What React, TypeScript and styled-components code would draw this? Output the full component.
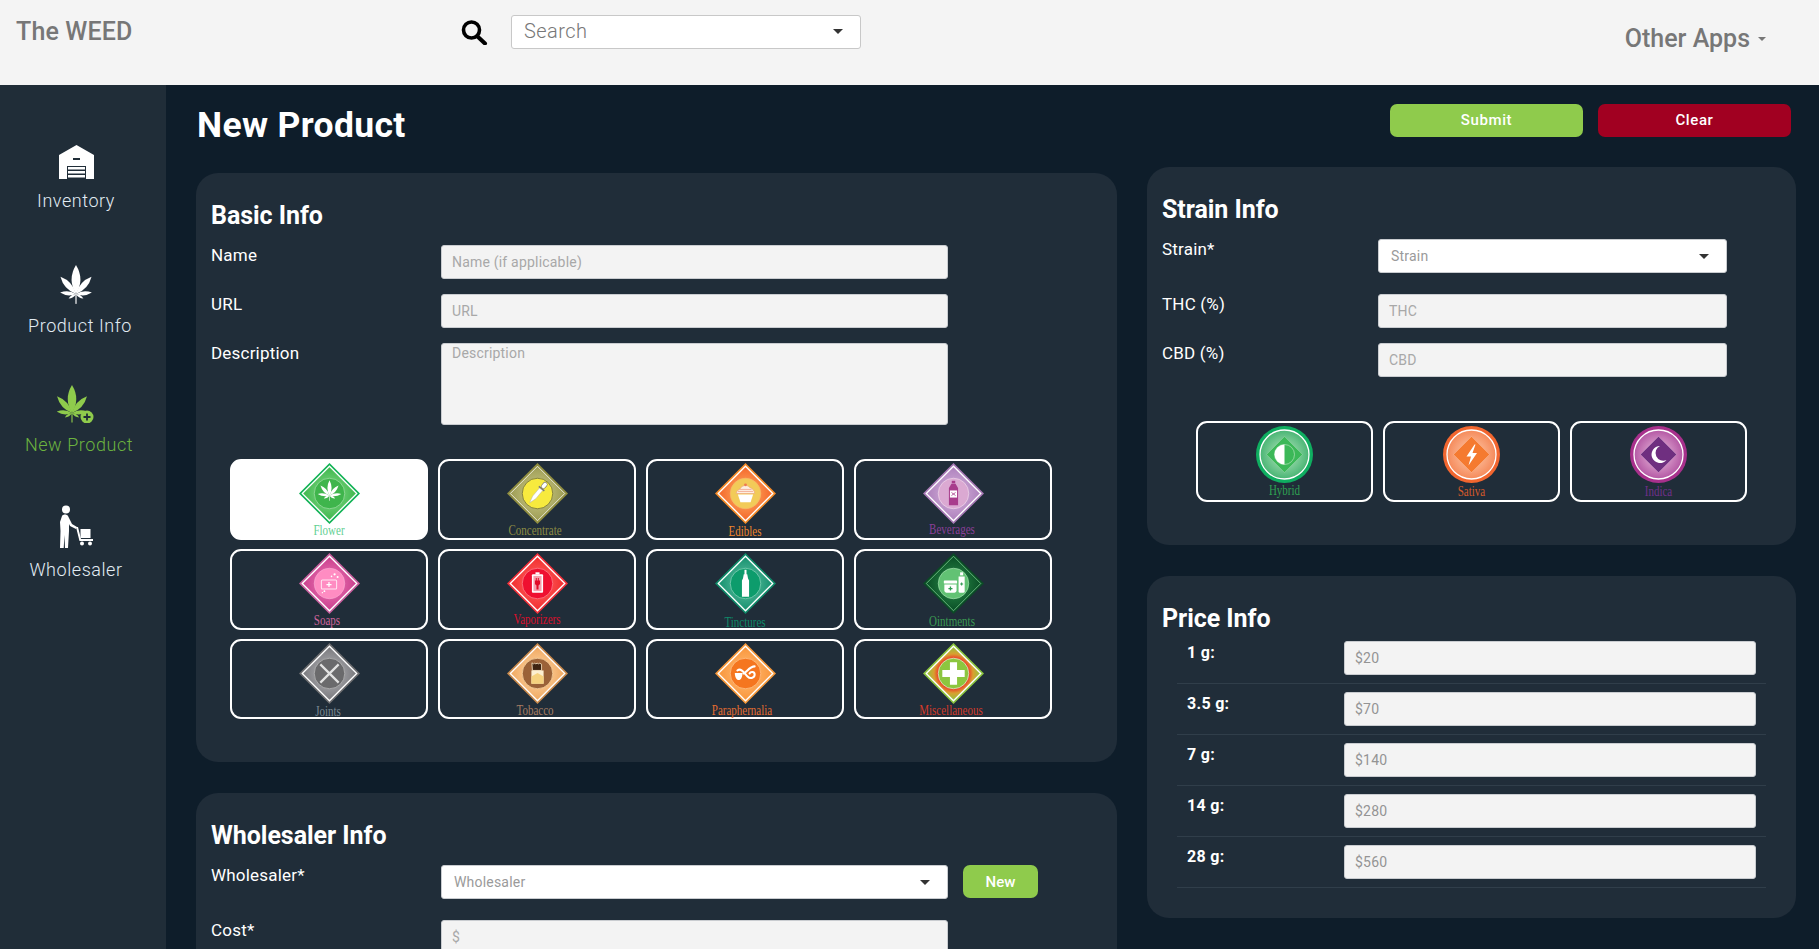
import React from "react";
import styled, { createGlobalStyle } from "styled-components";

const Global = createGlobalStyle`
  html, body { margin: 0; padding: 0; height: 100%; overflow: hidden; background: #0e1d2a; }
  body { font-family: Roboto, "Liberation Sans", sans-serif; }
  * { box-sizing: border-box; }
`;

const Page = styled.div`
  height: 100vh;
  display: flex;
  flex-direction: column;
  overflow: hidden;
`;
const Header = styled.header`
  height: 85px;
  flex: none;
  background: #f4f4f4;
  display: flex;
  align-items: flex-start;
  color: #777;
`;
const Brand = styled.div`
  margin: 17px 0 0 16px;
  width: 444px;
  font-size: 25px;
  line-height: 30px;
  font-weight: 500;
  letter-spacing: 0.15px;
`;
const SearchIcon = styled.svg`
  width: 28px;
  height: 26px;
  margin-top: 19px;
  flex: none;
`;
const SearchBox = styled.div`
  margin: 15px 0 0 23px;
  width: 350px;
  height: 34px;
  background: #fff;
  border: 1px solid #c8c8c8;
  border-radius: 3px;
  padding: 0 17px 2px 12px;
  display: flex;
  align-items: center;
  justify-content: space-between;
  font-size: 20px;
  font-weight: 300;
  letter-spacing: 0.45px;
  color: #777;
`;
const Caret = styled.span<{ $c?: string; $s?: number }>`
  width: 0;
  height: 0;
  flex: none;
  border-left: ${(p) => p.$s ?? 5}px solid transparent;
  border-right: ${(p) => p.$s ?? 5}px solid transparent;
  border-top: ${(p) => p.$s ?? 5}px solid ${(p) => p.$c ?? "#333"};
`;
const OtherApps = styled.div`
  margin: 24px 0 0 auto;
  padding-right: 53px;
  display: flex;
  align-items: center;
  gap: 8px;
  font-size: 25px;
  line-height: 30px;
  font-weight: 500;
  letter-spacing: 0;
`;
const Body = styled.div`
  flex: 1;
  display: flex;
  min-height: 0;
`;
const Sidebar = styled.nav`
  width: 166px;
  flex: none;
  background: #202d38;
  padding: 60px 14px 0 0;
  display: flex;
  flex-direction: column;
  align-items: center;
`;
const NavItem = styled.div<{ $h: number; $active?: boolean; $dx?: number }>`
  height: ${(p) => p.$h}px;
  width: 100%;
  display: flex;
  flex-direction: column;
  align-items: center;
  color: ${(p) => (p.$active ? "#6cb33f" : "#e2ecf4")};
  font-size: 18px;
  line-height: 22px;
  font-weight: 300;
  letter-spacing: 0.55px;
  svg { display: block; flex: none; }
  span { margin-top: 11px; transform: translateX(${(p) => p.$dx ?? 0}px); white-space: nowrap; }
`;
const Main = styled.main`
  flex: 1;
  display: flex;
  gap: 30px;
  padding-left: 30px;
  min-width: 0;
`;
const LeftCol = styled.div`
  width: 921px;
  flex: none;
`;
const RightCol = styled.div`
  width: 649px;
  flex: none;
`;
const Title = styled.h1`
  margin: 0;
  height: 88px;
  padding: 22px 0 0 1px;
  font-size: 35.5px;
  line-height: 36px;
  font-weight: 700;
  color: #fff;
  letter-spacing: 0.35px;
`;
const ButtonRow = styled.div`
  display: flex;
  justify-content: flex-end;
  gap: 15px;
  padding: 19px 5px 30px 0;
`;
const ActionButton = styled.button<{ $bg: string }>`
  width: 193px;
  height: 33px;
  border: 0;
  border-radius: 7px;
  background: ${(p) => p.$bg};
  color: #fff;
  font: 500 15px/33px Roboto, sans-serif;
  letter-spacing: 0.6px;
  padding: 0;
`;
const Card = styled.section<{ $h: number }>`
  height: ${(p) => p.$h}px;
  background: #202d39;
  border-radius: 22px;
  padding: 27px 0 0 15px;
  margin-bottom: 31px;
  color: #fff;
`;
const CardTitle = styled.h2<{ $mb?: number }>`
  margin: 0 0 ${(p) => p.$mb ?? 13}px;
  font-size: 25px;
  line-height: 32px;
  font-weight: 700;
  letter-spacing: -0.05px;
`;
const FormRow = styled.div<{ $mb: number; $col: number }>`
  display: flex;
  align-items: flex-start;
  margin-bottom: ${(p) => p.$mb}px;
  > label {
    width: ${(p) => p.$col}px;
    flex: none;
    font-size: 17px;
    line-height: 21px;
    letter-spacing: 0.2px;
  }
`;
const TextInput = styled.input<{ $w: number }>`
  width: ${(p) => p.$w}px;
  height: 34px;
  flex: none;
  background: #f3f3f3;
  border: 1px solid #c9ccd0;
  border-radius: 3px;
  padding: 0 10px;
  font: 14px Roboto, sans-serif;
  letter-spacing: 0.2px;
  outline: none;
  &::placeholder { color: #a8a8a8; opacity: 1; }
`;
const TextArea = styled.textarea`
  width: 507px;
  height: 82px;
  flex: none;
  background: #f3f3f3;
  border: 1px solid #c9ccd0;
  border-radius: 3px;
  padding: 1px 10px;
  font: 14px Roboto, sans-serif;
  letter-spacing: 0.2px;
  outline: none;
  resize: none;
  &::placeholder { color: #a8a8a8; opacity: 1; }
`;
const SelectBox = styled.div<{ $w: number }>`
  width: ${(p) => p.$w}px;
  height: 34px;
  flex: none;
  background: #fff;
  border: 1px solid #c9ccd0;
  border-radius: 3px;
  padding: 0 17px 0 12px;
  display: flex;
  align-items: center;
  justify-content: space-between;
  font-size: 14px;
  letter-spacing: 0.2px;
  color: #9a9a9a;
`;
const NewButton = styled.button`
  width: 75px;
  height: 33px;
  margin-left: 15px;
  border: 0;
  border-radius: 7px;
  background: #8fcb4c;
  color: #fff;
  font: 500 15px Roboto, sans-serif;
  padding: 0;
`;
const TileGrid = styled.div<{ $cols: number; $w: number; $gap: number; $pl: number; $mt: number; $row: string }>`
  display: grid;
  grid-template-columns: repeat(${(p) => p.$cols}, ${(p) => p.$w}px);
  grid-template-rows: ${(p) => p.$row};
  column-gap: ${(p) => p.$gap}px;
  row-gap: 9px;
  padding-left: ${(p) => p.$pl}px;
  margin-top: ${(p) => p.$mt}px;
`;
const Tile = styled.div<{ $active?: boolean; $pt: number }>`
  border: 2px solid #fff;
  border-radius: 11px;
  background: ${(p) => (p.$active ? "#fff" : "transparent")};
  display: flex;
  flex-direction: column;
  align-items: center;
  padding-top: ${(p) => p.$pt}px;
  svg { display: block; flex: none; }
`;
const TileLabel = styled.span<{ $c: string; $dx: number; $dy: number }>`
  font: 11px/12px "Liberation Serif", serif;
  color: ${(p) => p.$c};
  white-space: nowrap;
  transform: translate(${(p) => p.$dx}px, ${(p) => p.$dy}px) scaleY(1.35);
`;
const PriceList = styled.div`
  margin-left: 15px;
  width: 589px;
`;
const PriceRow = styled.div`
  height: 51px;
  padding: 8px 10px 8px 10px;
  border-bottom: 1px solid #303e4a;
  display: flex;
  align-items: flex-start;
  justify-content: space-between;
  > label {
    font-size: 16px;
    line-height: 24px;
    font-weight: 700;
    letter-spacing: 0.3px;
  }
  input::placeholder { color: #949494; }
`;

const leafPath = "M0 0Q1 -0.5 0 -1Q-1 -0.5 0 0Z";
const wideLeaf: [number, number, number][] = [
  [0, 1, 0.17], [-42, 0.88, 0.14], [42, 0.88, 0.14], [-82, 0.78, 0.11], [82, 0.78, 0.11], [-118, 0.42, 0.08], [118, 0.42, 0.08],
];
const tallLeaf: [number, number, number][] = [
  [0, 1, 0.19], [-42, 0.8, 0.13], [42, 0.8, 0.13], [-85, 0.55, 0.09], [85, 0.55, 0.09], [-122, 0.3, 0.05], [122, 0.3, 0.05],
];
function Leaf({ x, y, s, fill, parts }: { x: number; y: number; s: number; fill: string; parts: [number, number, number][] }) {
  return (
    <g transform={`translate(${x} ${y}) scale(${s})`} fill={fill}>
      {parts.map(([a, l, w], i) => (
        <path key={i} d={leafPath} transform={`rotate(${a}) scale(${w * 1.6} ${l})`} />
      ))}
      <rect x={-0.02} y={0} width={0.04} height={0.34} />
    </g>
  );
}

const glyphs: Record<string, React.ReactNode> = {
  flower: <Leaf x={30} y={32} s={15} fill="#fff" parts={wideLeaf} />,
  concentrate: (
    <g transform="rotate(40 30 30)" fill="#fff">
      <rect x={27.6} y={16} width={4.8} height={7} rx={2.3} fill="#777" />
      <rect x={28.2} y={16.6} width={3.6} height={6} rx={1.7} />
      <rect x={26.5} y={23} width={7} height={1.6} fill="#777" />
      <path d="M28 24.6h4v10.4l-2 7-2-7z" stroke="#aaa" strokeWidth="0.4" />
    </g>
  ),
  edibles: (
    <g>
      <path d="M22.5 31h15l-2.5 7.5h-10z" fill="#fff" />
      <path d="M21 30c0-3 3-4 4-5 1-3 7-4 9-1 3 1 5 3 5 6z" fill="#fdeee0" stroke="#eea777" strokeWidth="0.7" />
      <path d="M22.5 28h15M24 26h12" stroke="#f09a80" strokeWidth="0.7" />
      <circle cx={30} cy={21.5} r={1.4} fill="#ee7a50" />
    </g>
  ),
  beverages: (
    <g fill="#a83c8c">
      <rect x={28.3} y={17.5} width={3.4} height={2.5} />
      <path d="M28 20.5h4l2.5 4v17h-9v-17z" />
      <rect x={26.5} y={27} width={7} height={7} fill="#fff" />
      <path d="M28 29l4 3M32 29l-4 3" stroke="#a83c8c" strokeWidth="0.8" />
    </g>
  ),
  soaps: (
    <g fill="none" stroke="#ffe6f2">
      <rect x={22} y={26.5} width={15} height={9} rx={1} strokeWidth="1" />
      <path d="M29.5 28.5v5M27 31h5" stroke="#fff" strokeWidth="1.2" />
      <g fill="#fff" stroke="none">
        <circle cx={35} cy={21} r={1.1} /><circle cx={38} cy={23.5} r={1} /><circle cx={32} cy={23} r={0.8} />
        <circle cx={25} cy={37.5} r={0.9} /><circle cx={23} cy={39} r={0.7} />
      </g>
    </g>
  ),
  vaporizers: (
    <g>
      <rect x={28} y={19} width={4} height={2} fill="#fff" />
      <rect x={24.5} y={21} width={11} height={18} rx={1} fill="#fff" />
      <rect x={26} y={22.5} width={8} height={15} fill="#f5a0ac" />
      <path d="M27.5 27v3.5l1.5 1.5v4h2v-4l1.5-1.5v-3.5h-1.2v-2.5h-1v2.5h-1v-2.5h-1v2.5z" fill="#e00c28" />
    </g>
  ),
  tinctures: (
    <g fill="#fff">
      <rect x={29} y={16.5} width={2} height={5} />
      <path d="M28.3 21h3.4l.8 4 1 2v16h-7v-16l1-2z" />
    </g>
  ),
  ointments: (
    <g fill="#fff">
      <rect x={20.5} y={27} width={13} height={3} rx={0.6} />
      <path d="M21 31h12v6a2 2 0 0 1-2 2h-8a2 2 0 0 1-2-2z" />
      <path d="M27 33v4M25 35h4" stroke="#2d9a50" strokeWidth="1.3" />
      <rect x={36.5} y={19} width={3} height={3} />
      <path d="M35 23h6v14.5a1.5 1.5 0 0 1-1.5 1.5h-3a1.5 1.5 0 0 1-1.5-1.5z" />
      <path d="M38 29v3M36.5 30.5h3" stroke="#2d9a50" strokeWidth="1" />
    </g>
  ),
  joints: <path d="M21 21l18 18M39 21l-18 18" stroke="#e2e2e2" strokeWidth="2.2" />,
  tobacco: (
    <g>
      <path d="M24.5 19.5l1.5 1 1.2-.6 1.2.6 1.3-.6 1.2.6 1.3-.6 1.8 1V27h-9z" fill="#3d2412" stroke="#fbe9c8" strokeWidth="0.8" />
      <path d="M24 27h12v13H24z" fill="#fdf0d0" />
      <path d="M24 33l6-3.5 6 3.5v7H24z" fill="#f6d27e" />
    </g>
  ),
  paraphernalia: (
    <g fill="none" stroke="#fff" strokeLinecap="round">
      <path d="M22 27c4-3 7 3 10 6s7 1 7-2-4-3-5-1" strokeWidth="2" />
      <path d="M39 23c-5 0-8 6-11 7" strokeWidth="2" />
      <path d="M19.5 29.5h7.5c0 4-1.5 7-3.7 7s-3.8-3-3.8-7z" fill="#fff" stroke="none" />
    </g>
  ),
  misc: <path d="M26.5 19h7v7.5h7.5v7h-7.5v7.5h-7v-7.5h-7.5v-7h7.5z" fill="#fff" />,
};

type B = {
  key: string; label: string; edge: string; g0: string; g1: string; ring: string; ringStroke: string;
  text: string; dx: number; dy: number; inner?: number; line?: string;
};
const tiles: B[] = [
  { key: "flower", label: "Flower", edge: "#0fb254", g0: "#8ddc8e", g1: "#3cb64b", ring: "#3fb54c", ringStroke: "#a4e0a8", text: "#62cf92", dx: 0, dy: 0 },
  { key: "concentrate", label: "Concentrate", edge: "#8f8d3f", g0: "#cfcd8a", g1: "#9d9c55", ring: "#f7ea3e", ringStroke: "#62623a", text: "#8c8b44", dx: -2, dy: 0, inner: 0.8 },
  { key: "edibles", label: "Edibles", edge: "#f68c28", g0: "#ffb468", g1: "#f4662a", ring: "#f2cb58", ringStroke: "#f6b76a", text: "#ef852c", dx: 0, dy: 1 },
  { key: "beverages", label: "Beverages", edge: "#a87ab6", g0: "#d8b6de", g1: "#ad80bc", ring: "#dba9d2", ringStroke: "#eed6ea", text: "#8a3f98", dx: -1, dy: -1 },
  { key: "soaps", label: "Soaps", edge: "#c9609f", g0: "#f07ab8", g1: "#c83e8c", ring: "#ff8cc2", ringStroke: "#f9a8d0", text: "#cf649c", dx: -2, dy: 0 },
  { key: "vaporizers", label: "Vaporizers", edge: "#f3303a", g0: "#ff6a6a", g1: "#f22c2c", ring: "#ef1030", ringStroke: "#ff8a92", text: "#d80f2c", dx: 0, dy: -1 },
  { key: "tinctures", label: "Tinctures", edge: "#0e8a68", g0: "#68c4a6", g1: "#14906e", ring: "#0d9c6c", ringStroke: "#8cd4bc", text: "#0f8a68", dx: 0, dy: 2 },
  { key: "ointments", label: "Ointments", edge: "#0b4a26", g0: "#2a8f4a", g1: "#0b4f27", ring: "#62c274", ringStroke: "#a4e0ae", text: "#3c9a52", dx: -1, dy: 1, inner: 0.9, line: "#6fc584" },
  { key: "joints", label: "Joints", edge: "#6d6d70", g0: "#b8b8bc", g1: "#78787c", ring: "#6a6a6c", ringStroke: "#bcbcbc", text: "#7a8892", dx: -1, dy: 1 },
  { key: "tobacco", label: "Tobacco", edge: "#c98a4c", g0: "#ffdcb0", g1: "#f0a75e", ring: "#9b6238", ringStroke: "#ffdca8", text: "#a67c62", dx: -2, dy: 0 },
  { key: "paraphernalia", label: "Paraphernalia", edge: "#f79a3c", g0: "#ffbe7a", g1: "#f9953a", ring: "#f5761f", ringStroke: "#ffc890", text: "#e46c30", dx: -3, dy: 0 },
  { key: "misc", label: "Miscellaneous", edge: "#8cc63f", g0: "#f22828", g1: "#8cc63f", ring: "#8cc63f", ringStroke: "#e8f0d8", text: "#d23a2a", dx: -2, dy: 0 },
];

function Diamond({ b }: { b: B }) {
  const id = `g-${b.key}`;
  const isMisc = b.key === "misc";
  return (
    <svg width="61" height="61" viewBox="0 0 60 60">
      <defs>
        <radialGradient id={id}>
          <stop offset={isMisc ? "52%" : "0%"} stopColor={b.g0} />
          {isMisc && <stop offset="72%" stopColor="#d8a030" />}
          <stop offset="100%" stopColor={b.g1} />
        </radialGradient>
      </defs>
      <polygon points="30,0 60,30 30,60 0,30" fill={b.edge} />
      <polygon points="30,3.2 56.8,30 30,56.8 3.2,30" fill={`url(#${id})`} stroke={b.line ?? "#fff"} strokeWidth={b.inner ?? 1.3} />
      <circle cx="30" cy="30" r="15" fill={b.ring} stroke={b.ringStroke} strokeWidth="0.7" />
      {glyphs[b.key]}
    </svg>
  );
}

const strains = [
  { key: "hybrid", label: "Hybrid", edge: "#0fae60", g0: "#bce8c2", g1: "#49b574", dia: "#3cb858", text: "#2fa052", dx: 0, dy: -1 },
  { key: "sativa", label: "Sativa", edge: "#f2662f", g0: "#ffd0b4", g1: "#f58a5a", dia: "#f57a30", text: "#d45a2a", dx: 0, dy: 0 },
  { key: "indica", label: "Indica", edge: "#a8308c", g0: "#eec4e2", g1: "#b458a4", dia: "#6f2f80", text: "#70308a", dx: 0, dy: 0 },
];
const strainGlyph: Record<string, React.ReactNode> = {
  hybrid: (
    <g>
      <circle cx="28.5" cy="28.5" r="10" fill="#3cb858" stroke="#c8eccd" strokeWidth="0.6" />
      <path d="M28.5 18.5a10 10 0 0 0 0 20z" fill="#fff" />
    </g>
  ),
  sativa: <path d="M31.5 18.5l-8 12h4.5l-2.5 9 8.5-12.5h-4.5l3-8.5z" fill="#fff" />,
  indica: <path d="M30 20a8.5 8.5 0 1 0 6.5 14a7 7 0 0 1-6.5-14z" fill="#fff" />,
};
function StrainBadge({ s }: { s: (typeof strains)[number] }) {
  const id = `s-${s.key}`;
  return (
    <svg width="57" height="57" viewBox="0 0 57 57">
      <defs>
        <radialGradient id={id}>
          <stop offset="0%" stopColor={s.g0} />
          <stop offset="100%" stopColor={s.g1} />
        </radialGradient>
      </defs>
      <circle cx="28.5" cy="28.5" r="28.5" fill={s.edge} />
      <circle cx="28.5" cy="28.5" r="24.5" fill={`url(#${id})`} stroke="#fff" strokeWidth="1.3" />
      <polygon points="28.5,10.5 46.5,28.5 28.5,46.5 10.5,28.5" fill={s.dia} stroke="#ffffff66" strokeWidth="0.5" />
      {strainGlyph[s.key]}
    </svg>
  );
}

const Warehouse = () => (
  <svg width="35" height="34" viewBox="0 0 35 34" fill="#fff">
    <path fillRule="evenodd" d="M0 10L17.5 0 35 10v24H0zM14 13v2h7v-2zM8 21v13h19V21z" />
    <path d="M9 22h17v2.5H9zM9 26h17v2.5H9zM9 30h17v2.5H9z" />
  </svg>
);
const Person = () => (
  <svg width="33" height="43" viewBox="0 0 33 43" fill="#fff">
    <circle cx="6" cy="4.5" r="4" />
    <path d="M2 11c1-2 5-2 6 0l4 8 5 3-1 2-6-3-1-2v7l-1 17H5l-.5-13-.8 13H0l.5-17L0 17z" />
    <path d="M16 22h2l3 12h12v2H19.5z" />
    <rect x="20.5" y="24" width="10" height="9" />
    <circle cx="22" cy="38.5" r="2" /><circle cx="30" cy="38.5" r="2" />
  </svg>
);
const PlusLeaf = () => (
  <svg width="38" height="38" viewBox="0 0 38 38">
    <Leaf x={15} y={28} s={28} fill="#8fcb4c" parts={tallLeaf} />
    <circle cx="30" cy="32" r="6.5" fill="#8fcb4c" />
    <path d="M30 28.5v7M26.5 32h7" stroke="#1f2d38" strokeWidth="1.8" />
  </svg>
);
const WhiteLeaf = () => (
  <svg width="32" height="39" viewBox="0 0 32 39">
    <Leaf x={16} y={29} s={29} fill="#fff" parts={tallLeaf} />
  </svg>
);

const priceRows = [["1 g:", "$20"], ["3.5 g:", "$70"], ["7 g:", "$140"], ["14 g:", "$280"], ["28 g:", "$560"]];

export default function App() {
  return (
    <Page>
      <Global />
      <Header>
        <Brand>The WEED</Brand>
        <SearchIcon viewBox="0 0 28 26">
          <circle cx="11.5" cy="11" r="8" fill="none" stroke="#000" strokeWidth="3.6" />
          <path d="M17 17l8 7.5" stroke="#000" strokeWidth="4" strokeLinecap="round" />
        </SearchIcon>
        <SearchBox>Search<Caret $c="#333" /></SearchBox>
        <OtherApps>Other Apps<Caret $c="#777" $s={4} /></OtherApps>
      </Header>
      <Body>
        <Sidebar>
          <NavItem $h={120}><Warehouse /><span>Inventory</span></NavItem>
          <NavItem $h={120} $dx={4}><WhiteLeaf /><span>Product Info</span></NavItem>
          <NavItem $h={120} $active $dx={3}><PlusLeaf /><span>New Product</span></NavItem>
          <NavItem $h={120}><Person /><span>Wholesaler</span></NavItem>
        </Sidebar>
        <Main>
          <LeftCol>
            <Title>New Product</Title>
            <Card $h={589}>
              <CardTitle>Basic Info</CardTitle>
              <FormRow $mb={15} $col={230}>
                <label>Name</label>
                <TextInput $w={507} placeholder="Name (if applicable)" />
              </FormRow>
              <FormRow $mb={15} $col={230}>
                <label>URL</label>
                <TextInput $w={507} placeholder="URL" />
              </FormRow>
              <FormRow $mb={0} $col={230}>
                <label>Description</label>
                <TextArea placeholder="Description" />
              </FormRow>
              <TileGrid $cols={4} $w={198} $gap={10} $pl={19} $mt={34} $row="81px 81px 80px">
                {tiles.map((b, i) => (
                  <Tile key={b.key} $active={i === 0} $pt={2}>
                    <Diamond b={b} />
                    <TileLabel $c={b.text} $dx={b.dx} $dy={b.dy}>{b.label}</TileLabel>
                  </Tile>
                ))}
              </TileGrid>
            </Card>
            <Card $h={400}>
              <CardTitle>Wholesaler Info</CardTitle>
              <FormRow $mb={21} $col={230}>
                <label>Wholesaler*</label>
                <SelectBox $w={507}>Wholesaler<Caret /></SelectBox>
                <NewButton>New</NewButton>
              </FormRow>
              <FormRow $mb={15} $col={230}>
                <label>Cost*</label>
                <TextInput $w={507} placeholder="$" />
              </FormRow>
            </Card>
          </LeftCol>
          <RightCol>
            <ButtonRow>
              <ActionButton $bg="#8fcb4c">Submit</ActionButton>
              <ActionButton $bg="#a10021">Clear</ActionButton>
            </ButtonRow>
            <Card $h={378}>
              <CardTitle>Strain Info</CardTitle>
              <FormRow $mb={21} $col={216}>
                <label>Strain*</label>
                <SelectBox $w={349}>Strain<Caret /></SelectBox>
              </FormRow>
              <FormRow $mb={15} $col={216}>
                <label>THC (%)</label>
                <TextInput $w={349} placeholder="THC" />
              </FormRow>
              <FormRow $mb={0} $col={216}>
                <label>CBD (%)</label>
                <TextInput $w={349} placeholder="CBD" />
              </FormRow>
              <TileGrid $cols={3} $w={177} $gap={10} $pl={34} $mt={44} $row="81px">
                {strains.map((s) => (
                  <Tile key={s.key} $pt={3}>
                    <StrainBadge s={s} />
                    <TileLabel $c={s.text} $dx={s.dx} $dy={s.dy + 2}>{s.label}</TileLabel>
                  </Tile>
                ))}
              </TileGrid>
            </Card>
            <Card $h={342}>
              <CardTitle $mb={-2}>Price Info</CardTitle>
              <PriceList>
                {priceRows.map(([l, v]) => (
                  <PriceRow key={l}>
                    <label>{l}</label>
                    <TextInput $w={412} placeholder={v} />
                  </PriceRow>
                ))}
              </PriceList>
            </Card>
          </RightCol>
        </Main>
      </Body>
    </Page>
  );
}
